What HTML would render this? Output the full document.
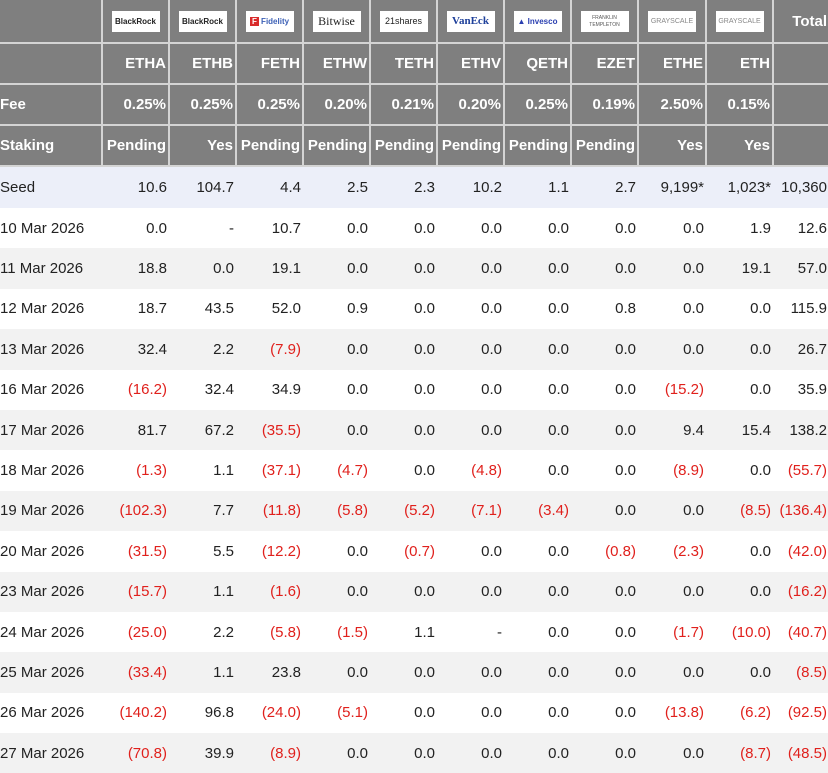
<!DOCTYPE html>
<html><head><meta charset="utf-8"><style>
*{margin:0;padding:0;box-sizing:border-box}
body{width:828px;height:773px;overflow:hidden;background:#fff;font-family:"Liberation Sans",Arial,sans-serif}
table{border-collapse:collapse;table-layout:fixed;width:829px}
td{font-size:15px;color:#222;text-align:right;padding:0 2px 0 0;white-space:nowrap;overflow:visible}
td:first-child{text-align:left;padding-left:0}
tr.h td{background:#7f7f7f;color:#fff;font-weight:bold;border:2px solid #d4d4d4;border-top:0}
tr.h td:first-child{border-left:0}
tr.h td:last-child{border-right:0}
tr.h1 td{height:43px}
tr.h2 td,tr.h3 td,tr.h4 td{height:41px}
tr.seed td{background:#eceff9;height:42px}
tr.d td{height:40.4px}
tr.g td{background:#f2f2f2}
.r{color:#e0201c}
.logo{display:inline-block;background:#fff;width:48px;height:21px;vertical-align:middle;font-size:8px;color:#222;font-weight:bold;line-height:21px;text-align:center;overflow:hidden}
tr.h1 td{text-align:center;padding:0}
</style></head><body>
<table>
<colgroup><col style="width:102px"><col style="width:67px"><col style="width:67px"><col style="width:67px"><col style="width:67px"><col style="width:67px"><col style="width:67px"><col style="width:67px"><col style="width:67px"><col style="width:68px"><col style="width:67px"><col style="width:56px"></colgroup>
<tr class="h h1"><td></td>
<td><span class="logo">BlackRock</span></td>
<td><span class="logo">BlackRock</span></td>
<td><span class="logo" style="color:#3b5fb5"><span style="background:#d92b2b;color:#fff;padding:0 2px">F</span> Fidelity</span></td>
<td><span class="logo" style="font-family:'Liberation Serif',serif;font-size:12px;font-weight:normal">Bitwise</span></td>
<td><span class="logo" style="font-size:9px;font-weight:normal">21shares</span></td>
<td><span class="logo" style="font-family:'Liberation Serif',serif;font-size:11px;color:#1d3f9a">VanEck</span></td>
<td><span class="logo" style="color:#2a3fb0">▲ Invesco</span></td>
<td><span class="logo" style="font-size:5px;font-weight:normal;line-height:7px;padding-top:4px;color:#555">FRANKLIN<br>TEMPLETON</span></td>
<td><span class="logo" style="font-size:7px;font-weight:normal;color:#888">GRAYSCALE</span></td>
<td><span class="logo" style="font-size:7px;font-weight:normal;color:#888">GRAYSCALE</span></td>
<td style="text-align:right;padding-right:2px">Total</td></tr>
<tr class="h h2"><td></td><td>ETHA</td><td>ETHB</td><td>FETH</td><td>ETHW</td><td>TETH</td><td>ETHV</td><td>QETH</td><td>EZET</td><td>ETHE</td><td>ETH</td><td></td></tr>
<tr class="h h3"><td>Fee</td><td>0.25%</td><td>0.25%</td><td>0.25%</td><td>0.20%</td><td>0.21%</td><td>0.20%</td><td>0.25%</td><td>0.19%</td><td>2.50%</td><td>0.15%</td><td></td></tr>
<tr class="h h4"><td>Staking</td><td>Pending</td><td>Yes</td><td>Pending</td><td>Pending</td><td>Pending</td><td>Pending</td><td>Pending</td><td>Pending</td><td>Yes</td><td>Yes</td><td></td></tr>
<tr class="seed"><td>Seed</td><td>10.6</td><td>104.7</td><td>4.4</td><td>2.5</td><td>2.3</td><td>10.2</td><td>1.1</td><td>2.7</td><td>9,199*</td><td>1,023*</td><td>10,360</td></tr>
<tr class="d"><td>10 Mar 2026</td><td>0.0</td><td>-</td><td>10.7</td><td>0.0</td><td>0.0</td><td>0.0</td><td>0.0</td><td>0.0</td><td>0.0</td><td>1.9</td><td>12.6</td></tr>
<tr class="d g"><td>11 Mar 2026</td><td>18.8</td><td>0.0</td><td>19.1</td><td>0.0</td><td>0.0</td><td>0.0</td><td>0.0</td><td>0.0</td><td>0.0</td><td>19.1</td><td>57.0</td></tr>
<tr class="d"><td>12 Mar 2026</td><td>18.7</td><td>43.5</td><td>52.0</td><td>0.9</td><td>0.0</td><td>0.0</td><td>0.0</td><td>0.8</td><td>0.0</td><td>0.0</td><td>115.9</td></tr>
<tr class="d g"><td>13 Mar 2026</td><td>32.4</td><td>2.2</td><td class="r">(7.9)</td><td>0.0</td><td>0.0</td><td>0.0</td><td>0.0</td><td>0.0</td><td>0.0</td><td>0.0</td><td>26.7</td></tr>
<tr class="d"><td>16 Mar 2026</td><td class="r">(16.2)</td><td>32.4</td><td>34.9</td><td>0.0</td><td>0.0</td><td>0.0</td><td>0.0</td><td>0.0</td><td class="r">(15.2)</td><td>0.0</td><td>35.9</td></tr>
<tr class="d g"><td>17 Mar 2026</td><td>81.7</td><td>67.2</td><td class="r">(35.5)</td><td>0.0</td><td>0.0</td><td>0.0</td><td>0.0</td><td>0.0</td><td>9.4</td><td>15.4</td><td>138.2</td></tr>
<tr class="d"><td>18 Mar 2026</td><td class="r">(1.3)</td><td>1.1</td><td class="r">(37.1)</td><td class="r">(4.7)</td><td>0.0</td><td class="r">(4.8)</td><td>0.0</td><td>0.0</td><td class="r">(8.9)</td><td>0.0</td><td class="r">(55.7)</td></tr>
<tr class="d g"><td>19 Mar 2026</td><td class="r">(102.3)</td><td>7.7</td><td class="r">(11.8)</td><td class="r">(5.8)</td><td class="r">(5.2)</td><td class="r">(7.1)</td><td class="r">(3.4)</td><td>0.0</td><td>0.0</td><td class="r">(8.5)</td><td class="r">(136.4)</td></tr>
<tr class="d"><td>20 Mar 2026</td><td class="r">(31.5)</td><td>5.5</td><td class="r">(12.2)</td><td>0.0</td><td class="r">(0.7)</td><td>0.0</td><td>0.0</td><td class="r">(0.8)</td><td class="r">(2.3)</td><td>0.0</td><td class="r">(42.0)</td></tr>
<tr class="d g"><td>23 Mar 2026</td><td class="r">(15.7)</td><td>1.1</td><td class="r">(1.6)</td><td>0.0</td><td>0.0</td><td>0.0</td><td>0.0</td><td>0.0</td><td>0.0</td><td>0.0</td><td class="r">(16.2)</td></tr>
<tr class="d"><td>24 Mar 2026</td><td class="r">(25.0)</td><td>2.2</td><td class="r">(5.8)</td><td class="r">(1.5)</td><td>1.1</td><td>-</td><td>0.0</td><td>0.0</td><td class="r">(1.7)</td><td class="r">(10.0)</td><td class="r">(40.7)</td></tr>
<tr class="d g"><td>25 Mar 2026</td><td class="r">(33.4)</td><td>1.1</td><td>23.8</td><td>0.0</td><td>0.0</td><td>0.0</td><td>0.0</td><td>0.0</td><td>0.0</td><td>0.0</td><td class="r">(8.5)</td></tr>
<tr class="d"><td>26 Mar 2026</td><td class="r">(140.2)</td><td>96.8</td><td class="r">(24.0)</td><td class="r">(5.1)</td><td>0.0</td><td>0.0</td><td>0.0</td><td>0.0</td><td class="r">(13.8)</td><td class="r">(6.2)</td><td class="r">(92.5)</td></tr>
<tr class="d g"><td>27 Mar 2026</td><td class="r">(70.8)</td><td>39.9</td><td class="r">(8.9)</td><td>0.0</td><td>0.0</td><td>0.0</td><td>0.0</td><td>0.0</td><td>0.0</td><td class="r">(8.7)</td><td class="r">(48.5)</td></tr>
</table>
</body></html>
